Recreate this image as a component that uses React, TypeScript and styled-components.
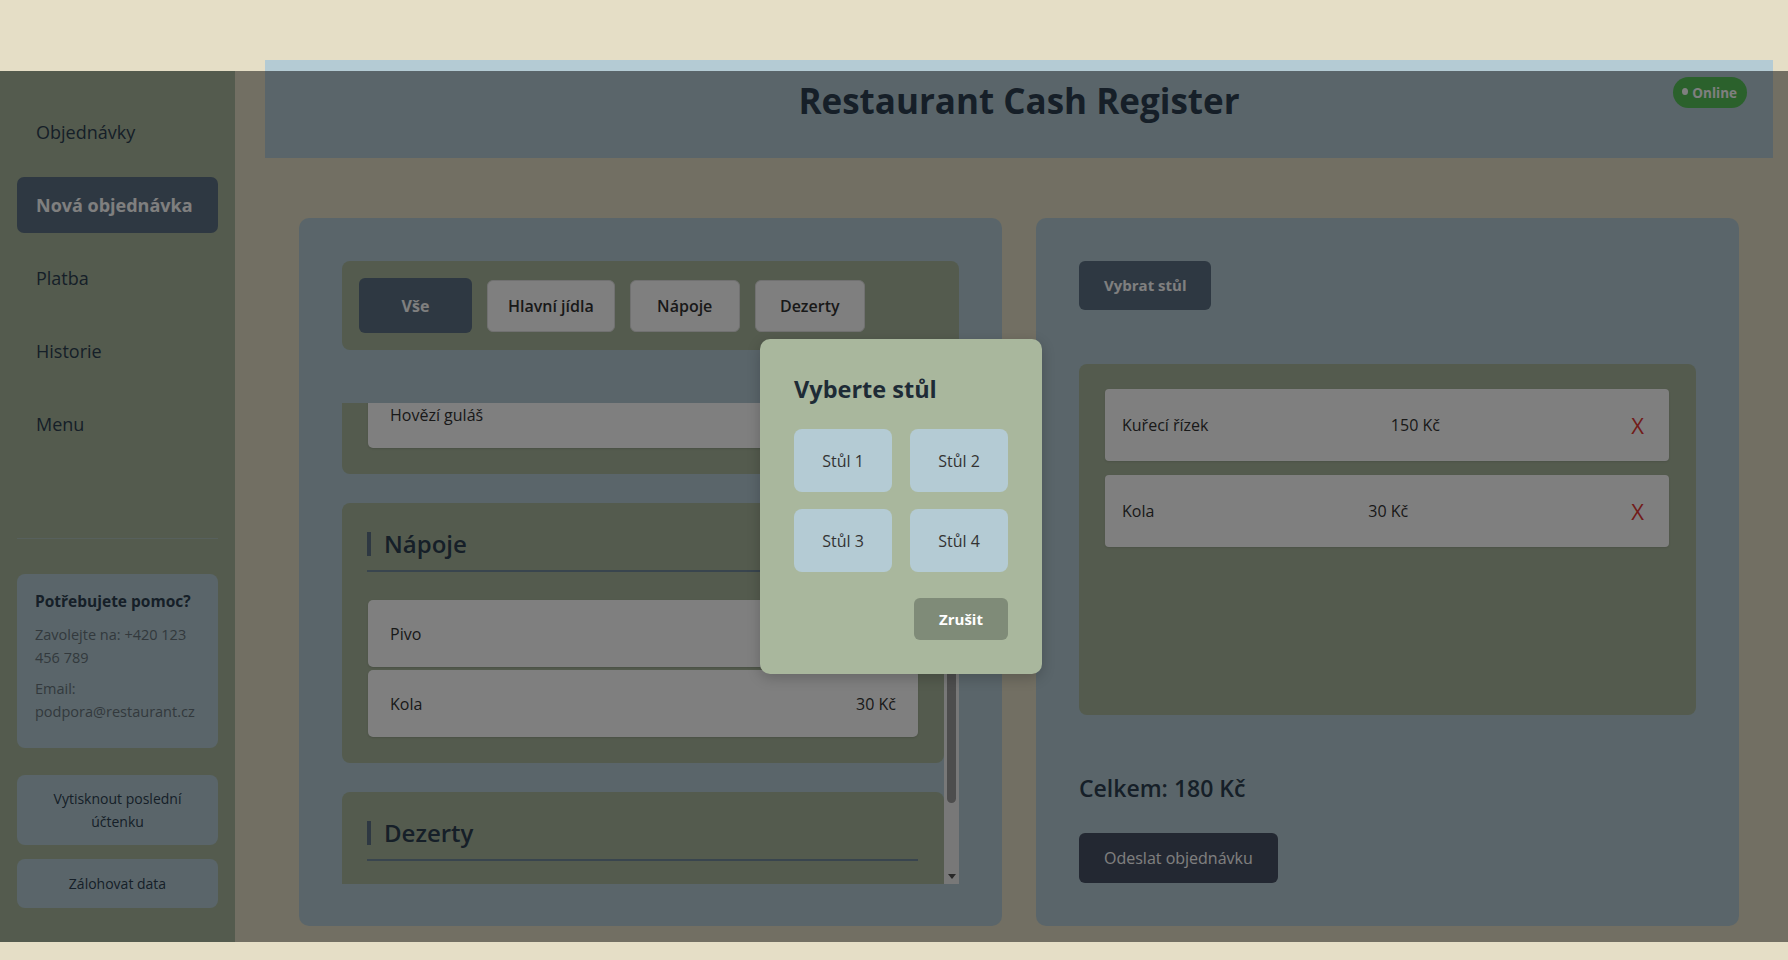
import React, { useLayoutEffect, useRef, useState } from "react";
import styled, { createGlobalStyle, css } from "styled-components";

const Global = createGlobalStyle`
  html, body { margin: 0; padding: 0; }
  body {
    font-family: "Open Sans", "Noto Sans", "Liberation Sans", sans-serif;
    background: #e5dec6;
  }
  * { box-sizing: border-box; }
  button { font-family: inherit; cursor: pointer; }
`;

const Page = styled.div`
  position: relative;
  width: 1788px;
  height: 960px;
  display: flex;
  background: #e5dec6;
  overflow: hidden;
`;

const Sidebar = styled.aside`
  width: 235px;
  flex: 0 0 235px;
  margin-top: 71px;
  height: 871px;
  background: #a8b69c;
  display: flex;
  flex-direction: column;
  padding: 33px 17px 34px;
`;

const Nav = styled.nav`
  display: flex;
  flex-direction: column;
  gap: 17px;
`;

const NavItem = styled.div<{ $active?: boolean }>`
  height: 56px;
  display: flex;
  align-items: center;
  padding: 0 19px;
  font-size: 18px;
  color: #2c3e50;
  border-radius: 7px;
  ${(p) =>
    p.$active &&
    css`
      background: #5c7084;
      color: #ffffff;
      font-weight: 700;
    `}
`;

const SidebarBottom = styled.div`
  margin-top: auto;
  display: flex;
  flex-direction: column;
`;

const Divider = styled.div`
  height: 1px;
  background: rgba(180, 203, 212, 0.55);
  margin-bottom: 35px;
`;

const HelpCard = styled.div`
  background: #b4cbd4;
  border-radius: 8px;
  padding: 17px 18px 17px;
  color: #66737b;
  font-size: 14.5px;
  line-height: 23px;
`;

const HelpTitle = styled.h4`
  margin: 0 0 11px;
  font-size: 15.5px;
  line-height: 21px;
  font-weight: 700;
  color: #2c3e50;
`;

const HelpText = styled.p`
  margin: 0 0 8px;
`;

const SideButton = styled.button<{ $gap: number }>`
  margin-top: ${(p) => p.$gap}px;
  min-height: 49px;
  padding: 12px 17px;
  border: none;
  border-radius: 8px;
  background: #b4cbd4;
  color: #2c3e50;
  font-size: 14px;
  line-height: 23px;
  text-align: center;
`;

const Main = styled.main`
  flex: 1;
  margin: 60px 15px 0 30px;
  display: flex;
  flex-direction: column;
`;

const Header = styled.header`
  position: relative;
  height: 98px;
  background: #b4cbd4;
  display: flex;
  align-items: center;
  justify-content: center;
  padding-bottom: 16px;
`;

const Title = styled.h1`
  margin: 0;
  font-size: 35px;
  font-weight: 700;
  color: #2c3e50;
  line-height: 44px;
`;

const StatusBadge = styled.div`
  position: absolute;
  top: 17px;
  right: 26px;
  height: 31px;
  padding: 0 10px 0 9px;
  border-radius: 16px;
  background: #56c259;
  color: #ffffff;
  font-size: 13.5px;
  font-weight: 700;
  display: flex;
  align-items: center;
  gap: 4px;
`;

const Dot = styled.span`
  width: 6px;
  height: 7px;
  border-radius: 50%;
  background: #ffffff;
  margin-top: -3px;
`;

const Content = styled.div`
  display: grid;
  grid-template-columns: 1fr 1fr;
  gap: 34px;
  padding: 60px 34px 0;
`;

const Panel = styled.section<{ $align?: string }>`
  height: 708px;
  background: #b4cbd4;
  border-radius: 10px;
  padding: 43px;
  display: flex;
  flex-direction: column;
  align-items: ${(p) => p.$align || "stretch"};
  min-width: 0;
`;

const TabBar = styled.div`
  background: #a8b69c;
  border-radius: 8px;
  padding: 17px;
  display: flex;
  align-items: center;
  gap: 15px;
  margin-bottom: 53px;
`;

const Tab = styled.button<{ $active?: boolean }>`
  min-width: 110px;
  height: 52px;
  padding: 0 20px;
  border: 1px solid #e2e2e2;
  border-radius: 6px;
  background: #ffffff;
  color: #333333;
  font-size: 16px;
  font-weight: 600;
  ${(p) =>
    p.$active &&
    css`
      min-width: 113px;
      height: 55px;
      border: none;
      background: #5c7084;
      color: #ffffff;
      font-weight: 700;
    `}
`;

const ScrollFrame = styled.div`
  flex: 1;
  min-height: 0;
  display: flex;
  margin-bottom: -1px;
`;

const MenuScroll = styled.div`
  flex: 1;
  min-width: 0;
  overflow-y: scroll;
  scrollbar-width: none;
  &::-webkit-scrollbar {
    display: none;
  }
`;

const ScrollTrack = styled.div`
  width: 15px;
  flex: 0 0 15px;
  background: #f1f1f1;
  display: flex;
  flex-direction: column;
`;

const ArrowButton = styled.div<{ $dir: "up" | "down" }>`
  height: 15px;
  flex: 0 0 15px;
  display: flex;
  align-items: center;
  justify-content: center;
  &::before {
    content: "";
    width: 0;
    height: 0;
    border-left: 4px solid transparent;
    border-right: 4px solid transparent;
    ${(p) =>
      p.$dir === "down"
        ? css`
            border-top: 5px solid #505050;
          `
        : css`
            border-bottom: 5px solid #505050;
          `}
  }
`;

const ThumbLane = styled.div`
  flex: 1;
  min-height: 0;
  padding: 0 3px;
`;

const Thumb = styled.div`
  width: 9px;
  background: #9a9a9a;
  border-radius: 5px;
`;

const Category = styled.div`
  background: #a8b69c;
  border-radius: 8px;
  padding: 25px 26px 26px 25px;
  margin-bottom: 29px;
`;

const CategoryHeading = styled.h3`
  margin: 4px 0 28px;
  padding-bottom: 14px;
  border-bottom: 2px solid #738b9d;
  font-size: 24px;
  line-height: 24px;
  font-weight: 600;
  color: #2c3e50;
`;

const HeadingLabel = styled.span`
  display: block;
  border-left: 4px solid #5c7084;
  padding-left: 13px;
`;

const MenuCard = styled.div`
  height: 67px;
  margin: 0 0 3px 1px;
  padding: 0 22px;
  background: #ffffff;
  border-radius: 5px;
  box-shadow: 0 1px 2px rgba(0, 0, 0, 0.12);
  display: flex;
  align-items: center;
  justify-content: space-between;
  font-size: 16px;
  color: #333333;

  &:last-child {
    margin-bottom: 0;
  }
`;

const PrimaryButton = styled.button`
  height: 49px;
  padding: 0 25px;
  border: none;
  border-radius: 6px;
  background: #5c7084;
  color: #ffffff;
  font-size: 15px;
  font-weight: 700;
  margin-bottom: 54px;
`;

const OrderList = styled.div`
  align-self: stretch;
  height: 352px;
  background: #a8b69c;
  border-radius: 8px;
  padding: 25px 27px 25px 26px;
  display: flex;
  flex-direction: column;
  gap: 14px;
`;

const OrderItem = styled.div`
  height: 72px;
  flex: 0 0 72px;
  padding: 0 16px 0 17px;
  background: #ffffff;
  border-radius: 4px;
  box-shadow: 0 1px 2px rgba(0, 0, 0, 0.1);
  display: flex;
  align-items: center;
  justify-content: space-between;
  font-size: 16px;
  color: #333333;
`;

const RemoveButton = styled.button`
  border: none;
  background: none;
  padding: 4px 9px;
  color: #e53935;
  font-size: 22px;
  line-height: 1;
`;

const Total = styled.h2`
  margin: 57px 0 0;
  font-size: 23px;
  line-height: 32px;
  font-weight: 600;
  color: #2c3e50;
`;

const SubmitButton = styled.button`
  margin-top: 29px;
  height: 50px;
  padding: 0 25px;
  border: none;
  border-radius: 6px;
  background: #475064;
  color: #ffffff;
  font-size: 16px;
`;

const Overlay = styled.div`
  position: absolute;
  left: 0;
  right: 0;
  top: 71px;
  height: 871px;
  background: rgba(0, 0, 0, 0.5);
  display: flex;
  align-items: center;
  justify-content: center;
  padding-left: 14px;
`;

const Modal = styled.div`
  width: 282px;
  padding: 34px;
  background: #a9b79d;
  border-radius: 10px;
  box-shadow: 0 4px 14px rgba(0, 0, 0, 0.2);
`;

const ModalTitle = styled.h2`
  margin: 0 0 24px;
  font-size: 23.5px;
  line-height: 32px;
  font-weight: 700;
  color: #1e2b36;
`;

const TableGrid = styled.div`
  display: grid;
  grid-template-columns: repeat(2, 98px);
  column-gap: 18px;
  row-gap: 17px;
`;

const TableButton = styled.button`
  height: 63px;
  border: none;
  border-radius: 8px;
  background: #b4cbd4;
  color: #333333;
  font-size: 16px;
`;

const ModalFooter = styled.div`
  display: flex;
  justify-content: flex-end;
  margin-top: 26px;
`;

const CancelButton = styled.button`
  width: 94px;
  height: 42px;
  border: none;
  border-radius: 6px;
  background: #7f8b78;
  color: #ffffff;
  font-size: 15px;
  font-weight: 700;
`;

const navItems = ["Objednávky", "Nová objednávka", "Platba", "Historie", "Menu"];
const tabs = ["Vše", "Hlavní jídla", "Nápoje", "Dezerty"];

const menu = [
  {
    name: "Hlavní jídla",
    items: [
      ["Svíčková na smetaně", "180 Kč"],
      ["Kuřecí řízek", "150 Kč"],
      ["Hovězí guláš", "160 Kč"],
    ],
  },
  {
    name: "Nápoje",
    items: [
      ["Pivo", "45 Kč"],
      ["Kola", "30 Kč"],
    ],
  },
  {
    name: "Dezerty",
    items: [["Jablečný štrúdl", "80 Kč"]],
  },
];

const order = [
  ["Kuřecí řízek", "150 Kč"],
  ["Kola", "30 Kč"],
];

export default function App() {
  const scrollRef = useRef<HTMLDivElement>(null);
  const firstRef = useRef<HTMLDivElement>(null);
  const laneRef = useRef<HTMLDivElement>(null);
  const [thumb, setThumb] = useState({ top: 0, height: 0 });

  useLayoutEffect(() => {
    const s = scrollRef.current;
    const f = firstRef.current;
    const lane = laneRef.current;
    if (s && f) {
      s.scrollTop = f.offsetHeight - 71;
      if (lane) {
        const laneH = lane.clientHeight;
        const ratio = laneH / s.scrollHeight;
        setThumb({ top: s.scrollTop * ratio, height: s.clientHeight * ratio });
      }
    }
  }, []);

  return (
    <>
      <Global />
      <Page>
        <Sidebar>
          <Nav>
            {navItems.map((n) => (
              <NavItem key={n} $active={n === "Nová objednávka"}>
                {n}
              </NavItem>
            ))}
          </Nav>
          <SidebarBottom>
            <Divider />
            <HelpCard>
              <HelpTitle>Potřebujete pomoc?</HelpTitle>
              <HelpText>Zavolejte na: +420 123 456 789</HelpText>
              <HelpText>Email: podpora@restaurant.cz</HelpText>
            </HelpCard>
            <SideButton $gap={27}>Vytisknout poslední účtenku</SideButton>
            <SideButton $gap={14}>Zálohovat data</SideButton>
          </SidebarBottom>
        </Sidebar>

        <Main>
          <Header>
            <Title>Restaurant Cash Register</Title>
            <StatusBadge>
              <Dot />
              Online
            </StatusBadge>
          </Header>
          <Content>
            <Panel>
              <TabBar>
                {tabs.map((t) => (
                  <Tab key={t} $active={t === "Vše"}>
                    {t}
                  </Tab>
                ))}
              </TabBar>
              <ScrollFrame>
                <MenuScroll ref={scrollRef}>
                  {menu.map((c, i) => (
                    <Category key={c.name} ref={i === 0 ? firstRef : undefined}>
                      <CategoryHeading>
                        <HeadingLabel>{c.name}</HeadingLabel>
                      </CategoryHeading>
                      {c.items.map(([n, p]) => (
                        <MenuCard key={n}>
                          <span>{n}</span>
                          <span>{p}</span>
                        </MenuCard>
                      ))}
                    </Category>
                  ))}
                </MenuScroll>
                <ScrollTrack>
                  <ArrowButton $dir="up" />
                  <ThumbLane ref={laneRef}>
                    <Thumb style={{ marginTop: thumb.top, height: thumb.height }} />
                  </ThumbLane>
                  <ArrowButton $dir="down" />
                </ScrollTrack>
              </ScrollFrame>
            </Panel>

            <Panel $align="flex-start">
              <PrimaryButton>Vybrat stůl</PrimaryButton>
              <OrderList>
                {order.map(([n, p]) => (
                  <OrderItem key={n}>
                    <span>{n}</span>
                    <span>{p}</span>
                    <RemoveButton>X</RemoveButton>
                  </OrderItem>
                ))}
              </OrderList>
              <Total>Celkem: 180 Kč</Total>
              <SubmitButton>Odeslat objednávku</SubmitButton>
            </Panel>
          </Content>
        </Main>

        <Overlay>
          <Modal>
            <ModalTitle>Vyberte stůl</ModalTitle>
            <TableGrid>
              {[1, 2, 3, 4].map((n) => (
                <TableButton key={n}>Stůl {n}</TableButton>
              ))}
            </TableGrid>
            <ModalFooter>
              <CancelButton>Zrušit</CancelButton>
            </ModalFooter>
          </Modal>
        </Overlay>
      </Page>
    </>
  );
}
